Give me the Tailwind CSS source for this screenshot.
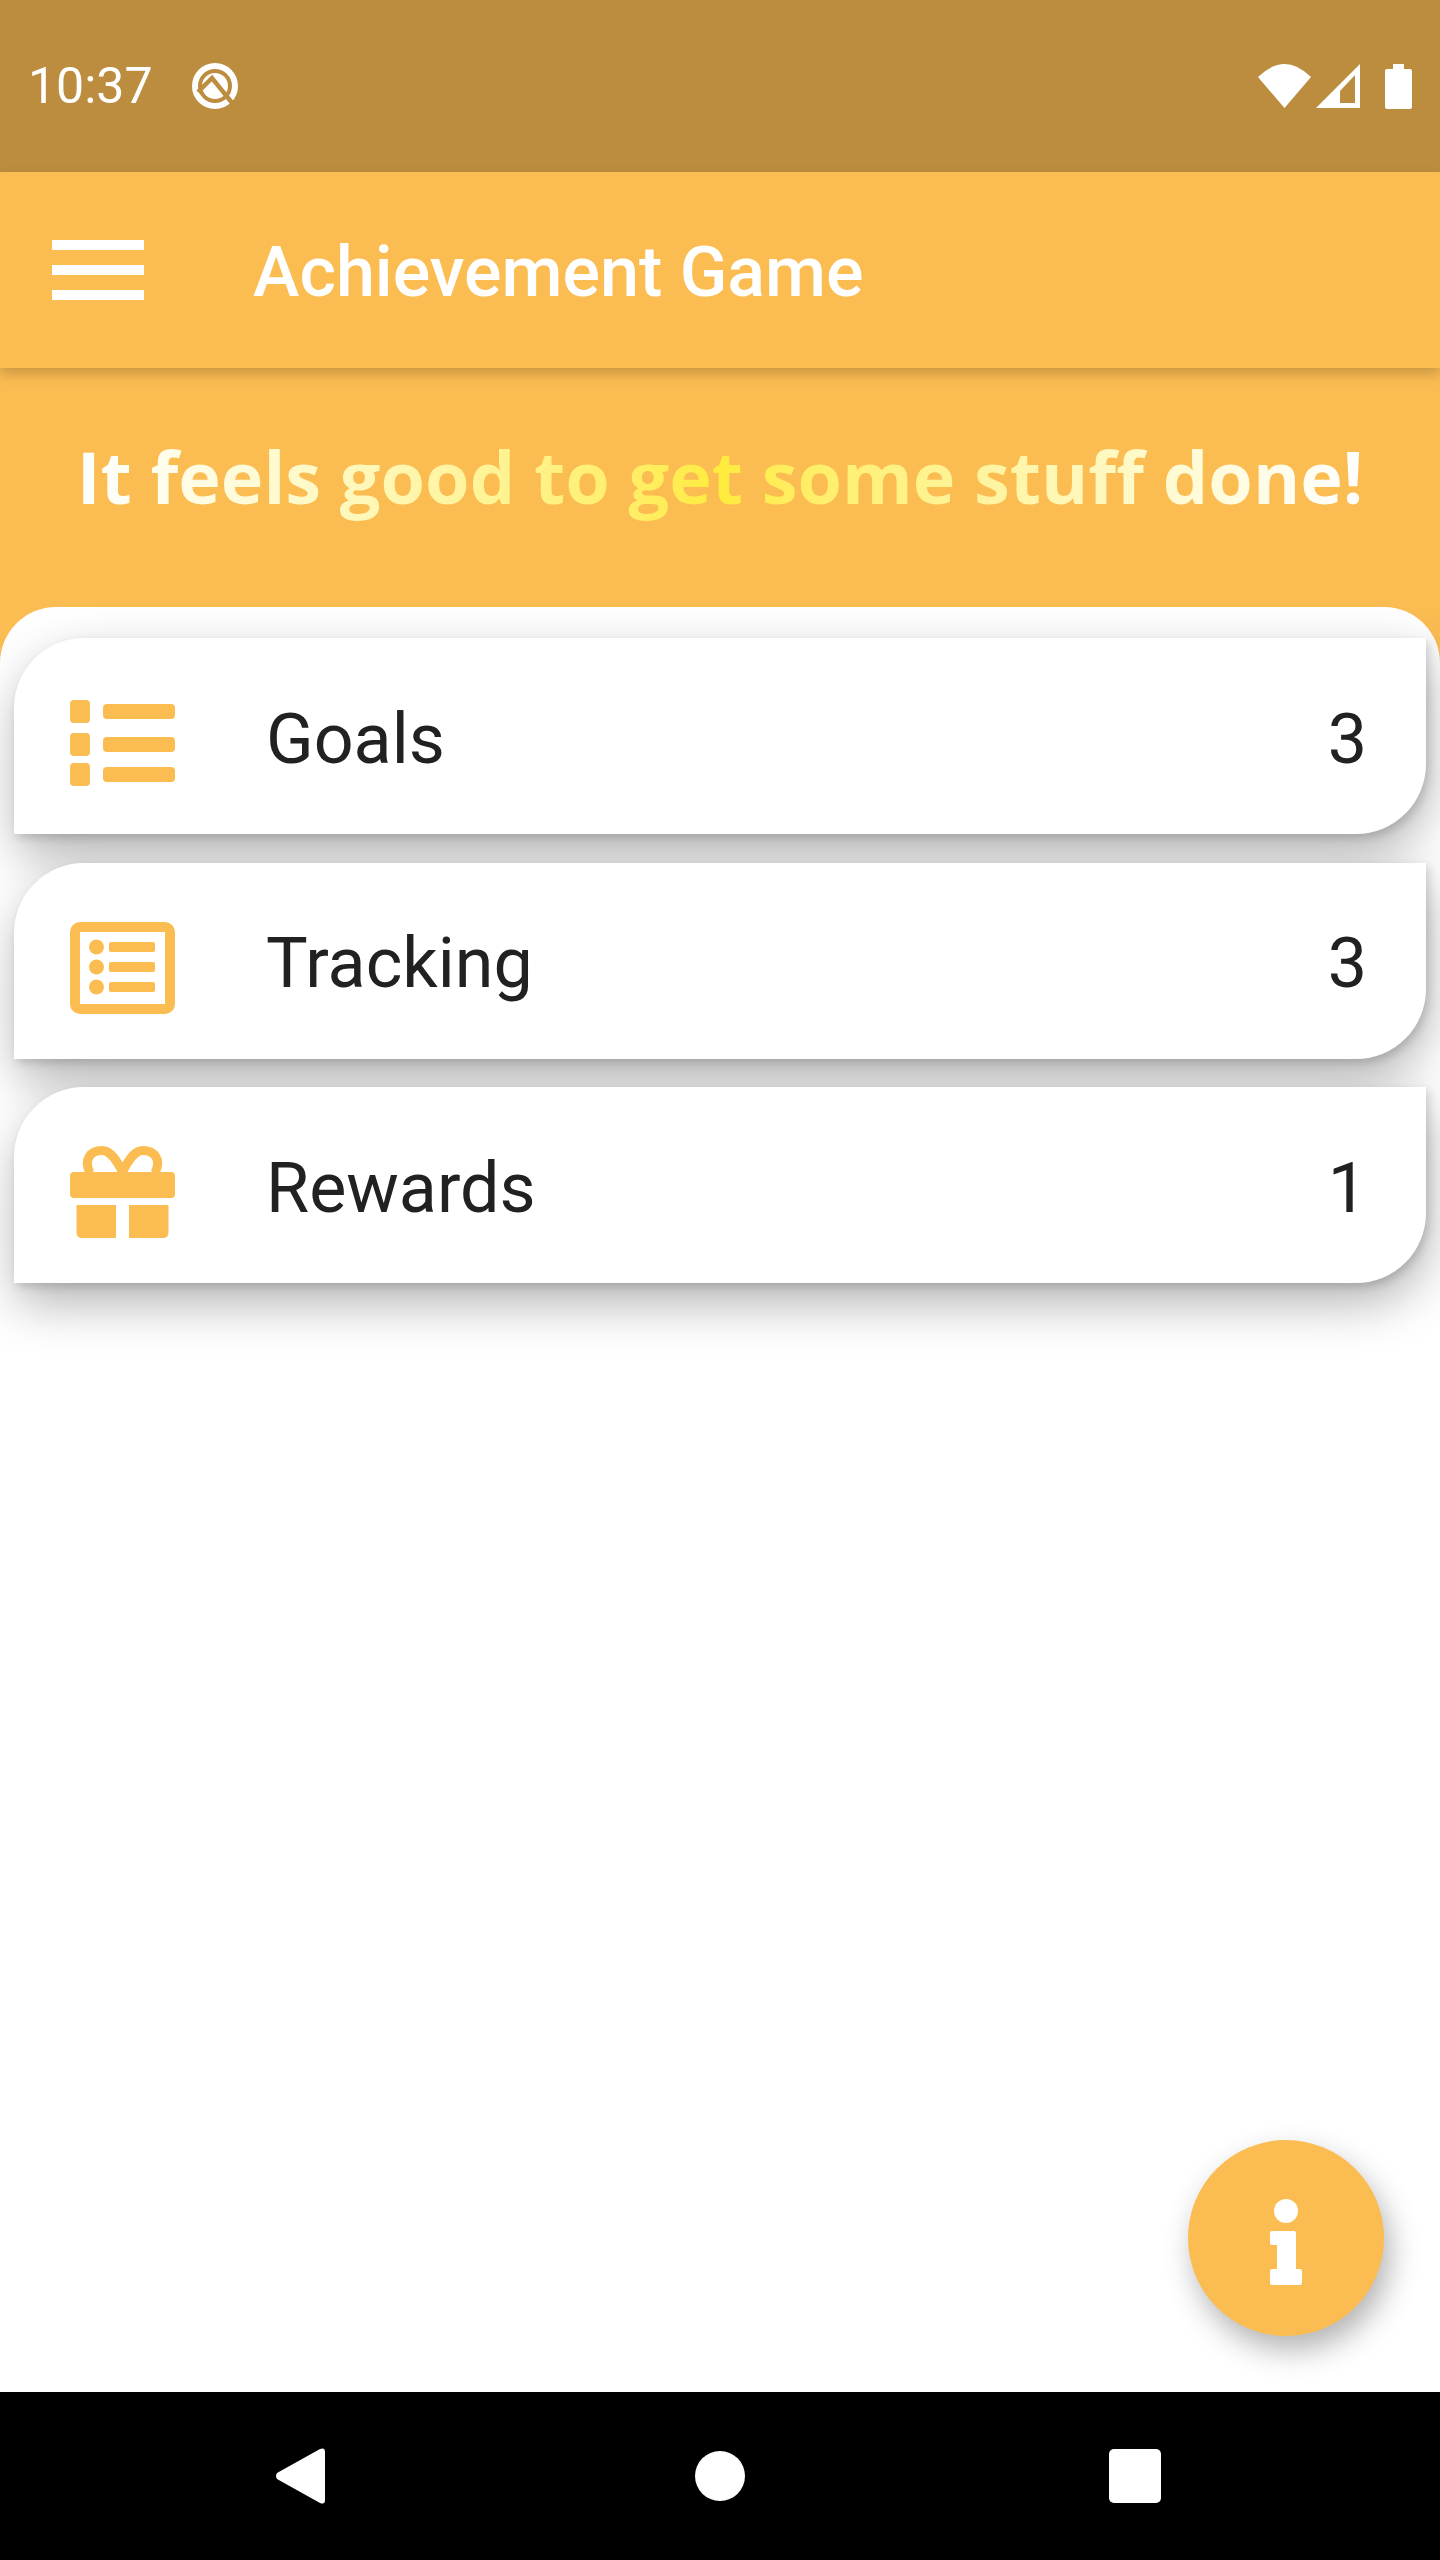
<!DOCTYPE html>
<html lang="en">
<head>
  <meta charset="UTF-8">
  <meta name="viewport" content="width=device-width, initial-scale=1.0">
  <title>Achievement Game</title>
  <script src="https://cdn.jsdelivr.net/npm/@tailwindcss/browser@4"></script>
</head>
<body class="font-['Roboto',sans-serif] bg-white">
<div class="relative w-[1440px] h-[2560px] flex flex-col overflow-hidden bg-white">

  <!-- Status bar -->
  <div class="h-[172px] bg-[#bc8d3e] flex items-center justify-between pl-[28px] pr-[28px] text-white">
    <div class="flex items-center gap-[38px]">
      <span class="text-[50px] leading-none font-normal">10:37</span>
      <svg class="w-[50px] h-[48px]" viewBox="0 0 50 48" fill="none">
        <circle cx="24" cy="24" r="20" stroke="#fff" stroke-width="6"/>
        <circle cx="24" cy="24" r="13" fill="#fff"/>
        <path d="M7 30 L21 16 L46 47" stroke="#bc8d3e" stroke-width="4.500"/>
      </svg>
    </div>
    <div class="flex items-center">
      <svg class="w-[53px] h-[44px]" viewBox="0 0 53 44" fill="#fff"><path d="M0 13 Q26.500 -13 53 13 L26.500 44 Z"/></svg>
      <svg class="w-[44px] h-[44px] ml-[5px]" viewBox="0 0 44 44" fill="#fff" fill-rule="evenodd"><path d="M44 0 V44 H0 Z M39 11 L24 27 V39 H39 Z"/></svg>
      <svg class="w-[27px] h-[45px] ml-[25px]" viewBox="0 0 27 45" fill="#fff"><path d="M8 0 H19 V5 H25 Q27 5 27 7 V43 Q27 45 25 45 H2 Q0 45 0 43 V7 Q0 5 2 5 H8 Z"/></svg>
    </div>
  </div>

  <!-- App bar -->
  <header class="relative z-10 h-[196px] bg-[#fbbc52] flex items-center shadow-[0_6px_12px_rgba(0,0,0,0.2)]">
    <div class="ml-[52px] w-[92px] flex flex-col gap-[15px]">
      <div class="h-[10px] bg-white"></div>
      <div class="h-[10px] bg-white"></div>
      <div class="h-[10px] bg-white"></div>
    </div>
    <h1 class="ml-[109px] mt-[3px] text-[70px] leading-none font-medium text-white">Achievement Game</h1>
  </header>

  <!-- Banner -->
  <div class="h-[295px] bg-[#fbbc52] flex justify-center pt-[63px]">
    <p class="h-[100px] text-[72px] leading-[90px] font-['Open_Sans',sans-serif] font-bold whitespace-nowrap bg-linear-to-r from-white via-[#ffeb3b] to-white bg-clip-text text-transparent">It feels good to get some stuff done!</p>
  </div>

  <!-- List panel -->
  <main class="relative flex-1 bg-white rounded-t-[56px] -mt-[56px] px-[14px] pt-[31px]">
    <div class="flex flex-col gap-[28.5px] text-[#212121]">

      <div class="h-[196px] bg-white rounded-tl-[70px] rounded-br-[70px] shadow-[3px_4px_8px_rgba(0,0,0,0.14),3px_20px_50px_rgba(0,0,0,0.3)] flex items-center pl-[56px] pr-[59px] pt-[5px]">
        <svg class="w-[105px] h-[86px] mt-[9px]" viewBox="0 0 105 86" fill="#fbbc52">
          <rect x="0" y="0" width="20" height="23" rx="4"/><rect x="33" y="4" width="72" height="15" rx="4"/>
          <rect x="0" y="33" width="20" height="23" rx="4"/><rect x="33" y="37" width="72" height="15" rx="4"/>
          <rect x="0" y="63" width="20" height="23" rx="4"/><rect x="33" y="67" width="72" height="15" rx="4"/>
        </svg>
        <span class="ml-[91px] flex-1 text-[70px] leading-none">Goals</span>
        <span class="text-[70px] leading-none">3</span>
      </div>

      <div class="h-[196px] bg-white rounded-tl-[70px] rounded-br-[70px] shadow-[3px_4px_8px_rgba(0,0,0,0.14),3px_20px_50px_rgba(0,0,0,0.3)] flex items-center pl-[56px] pr-[59px] pt-[5px]">
        <svg class="w-[105px] h-[92px] mt-[9px]" viewBox="0 0 105 92" fill="#fbbc52">
          <rect x="5" y="5" width="95" height="82" rx="5" fill="none" stroke="#fbbc52" stroke-width="10"/>
          <ellipse cx="26.5" cy="25" rx="7.5" ry="7.5"/><rect x="39" y="20" width="46" height="10" rx="2"/>
          <ellipse cx="26.5" cy="45" rx="7.5" ry="7.5"/><rect x="39" y="40" width="46" height="10" rx="2"/>
          <ellipse cx="26.5" cy="65" rx="7.5" ry="7.5"/><rect x="39" y="60" width="46" height="10" rx="2"/>
        </svg>
        <span class="ml-[91px] flex-1 text-[70px] leading-none">Tracking</span>
        <span class="text-[70px] leading-none">3</span>
      </div>

      <div class="h-[196px] bg-white rounded-tl-[70px] rounded-br-[70px] shadow-[3px_4px_8px_rgba(0,0,0,0.14),3px_20px_50px_rgba(0,0,0,0.3)] flex items-center pl-[56px] pr-[59px] pt-[5px]">
        <svg class="w-[105px] h-[92px] mt-[9px]" viewBox="0 0 105 92" fill="#fbbc52">
          <path d="M20 27 C13 13 21 4.500 32 4.500 C41 4.500 47 15 52.500 26 C58 15 64 4.500 73 4.500 C84 4.500 92 13 85 27" fill="none" stroke="#fbbc52" stroke-width="9"/>
          <rect x="0" y="26" width="105" height="26" rx="4"/>
          <path d="M6.500 59 H46 V92 H12 Q6.500 92 6.500 86 Z"/>
          <path d="M59 59 H98.500 V86 Q98.500 92 93 92 H59 Z"/>
        </svg>
        <span class="ml-[91px] flex-1 text-[70px] leading-none">Rewards</span>
        <span class="text-[70px] leading-none">1</span>
      </div>

    </div>
  </main>

  <!-- Info button -->
  <button class="absolute left-[1188px] top-[2140px] w-[196px] h-[196px] rounded-full bg-[#fbbc52] flex items-center justify-center shadow-[6px_14px_30px_rgba(0,0,0,0.3)]">
    <svg class="w-[32px] h-[86px] mt-[7px]" viewBox="0 0 32 86" fill="#fff">
      <circle cx="16" cy="12" r="12"/>
      <path d="M2 32 H24 Q26 32 26 34 V70 H30 Q32 70 32 72 V84 Q32 86 30 86 H2 Q0 86 0 84 V72 Q0 70 2 70 H7 V46 H2 Q0 46 0 44 V34 Q0 32 2 32 Z"/>
    </svg>
  </button>

  <!-- Navigation bar -->
  <nav class="h-[168px] bg-black relative shrink-0">
    <svg class="absolute left-[276px] top-[56px] w-[49px] h-[56px]" viewBox="0 0 49 56" fill="#fff"><path d="M1 25 L44 1 Q49 -1 49 4 V52 Q49 57 44 55 L1 31 Q-1 28 1 25 Z"/></svg>
    <div class="absolute left-[695px] top-[59px] w-[50px] h-[50px] rounded-full bg-white"></div>
    <div class="absolute left-[1109px] top-[57px] w-[52px] h-[54px] rounded-[5px] bg-white"></div>
  </nav>
</div>
</body>
</html>
